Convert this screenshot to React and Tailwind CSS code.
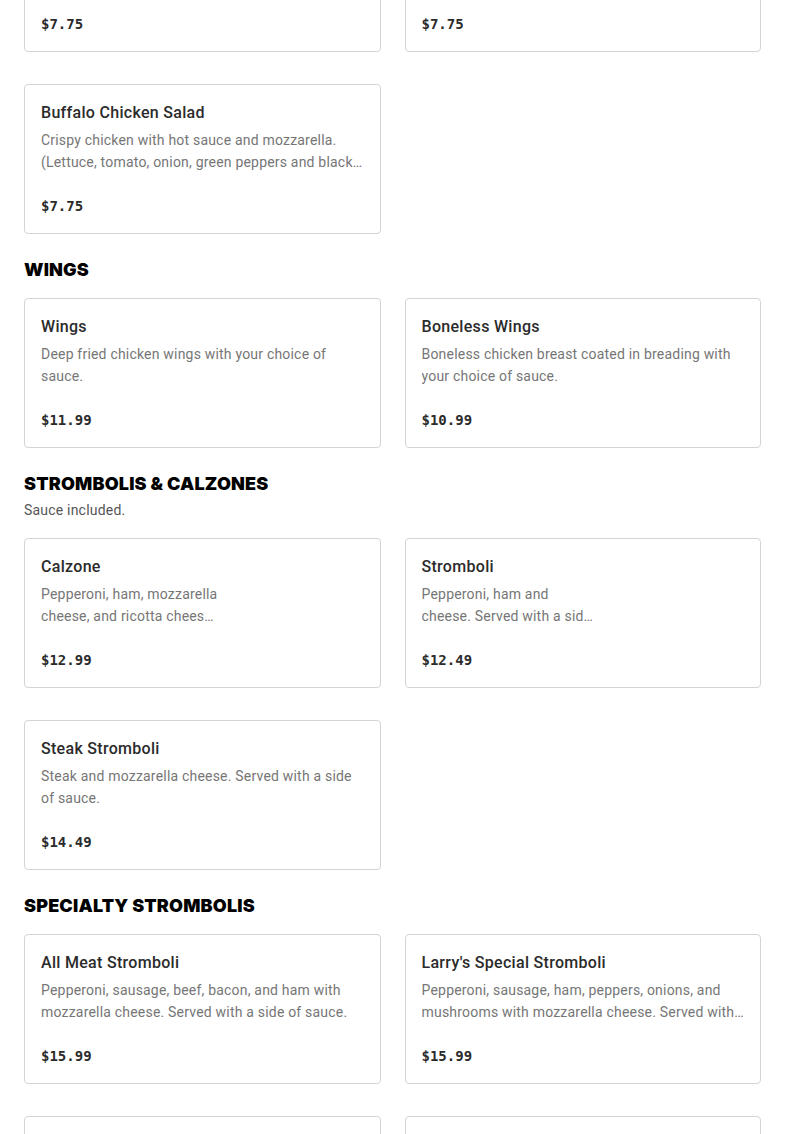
const sections = [
  {
    title: null,
    items: [
      { name: 'Chef Salad', desc: 'Ham, turkey, cheese, lettuce, tomato, onion and green peppers.', price: '$7.75' },
      { name: 'Grilled Chicken Salad', desc: 'Grilled chicken with mozzarella. Lettuce, tomato, onion and green peppers.', price: '$7.75' },
      { name: 'Buffalo Chicken Salad', desc: 'Crispy chicken with hot sauce and mozzarella. (Lettuce, tomato, onion, green peppers and black olives.)', price: '$7.75' },
    ],
  },
  {
    title: 'WINGS',
    items: [
      { name: 'Wings', desc: 'Deep fried chicken wings with your choice of sauce.', price: '$11.99' },
      { name: 'Boneless Wings', desc: 'Boneless chicken breast coated in breading with your choice of sauce.', price: '$10.99' },
    ],
  },
  {
    title: 'STROMBOLIS & CALZONES',
    sub: 'Sauce included.',
    items: [
      { name: 'Calzone', desc: 'Pepperoni, ham, mozzarella cheese, and ricotta cheese. Served with a side of sauce.', price: '$12.99', narrow: true },
      { name: 'Stromboli', desc: 'Pepperoni, ham and cheese. Served with a side of sauce.', price: '$12.49', narrow: true },
      { name: 'Steak Stromboli', desc: 'Steak and mozzarella cheese. Served with a side of sauce.', price: '$14.49' },
    ],
  },
  {
    title: 'SPECIALTY STROMBOLIS',
    items: [
      { name: 'All Meat Stromboli', desc: 'Pepperoni, sausage, beef, bacon, and ham with mozzarella cheese. Served with a side of sauce.', price: '$15.99' },
      { name: "Larry's Special Stromboli", desc: 'Pepperoni, sausage, ham, peppers, onions, and mushrooms with mozzarella cheese. Served with a side of sauce.', price: '$15.99' },
      { name: 'Chicken Bacon Ranch Stromboli', desc: 'Chicken, bacon, ranch and mozzarella cheese. Served with a side of sauce.', price: '$15.99' },
      { name: 'Veggie Stromboli', desc: 'Peppers, onions, mushrooms, black olives and mozzarella cheese.', price: '$14.99' },
    ],
  },
];

function ItemCard({ item }) {
  return (
    <div className="h-[150px] rounded border border-[#d4d4d4] bg-white p-4 flex flex-col">
      <p className="text-[16px] leading-6 font-medium tracking-[0.3px] text-[#2b2b2b]">{item.name}</p>
      <p className={`mt-1 min-h-[44px] text-[14px] leading-[22px] tracking-[0.2px] text-[#767676] line-clamp-2 ${item.narrow ? 'w-[177px]' : ''}`}>
        {item.desc}
      </p>
      <p className="mt-[23px] text-[14px] leading-5 font-bold text-[#2b2b2b]" style={{ fontFamily: '"DejaVu Sans Mono", "Liberation Mono", monospace' }}>
        {item.price}
      </p>
    </div>
  );
}

export default function App() {
  return (
    <div className="h-[1134px] overflow-hidden bg-white" style={{ fontFamily: 'Roboto, "Noto Sans", sans-serif' }}>
      <div className="-mt-[98px] px-6 flex flex-col gap-6">
        {sections.map((s, i) => (
          <section key={i}>
            {s.title && (
              <div className={s.sub ? 'mb-[18px]' : 'mb-4'}>
                <h2 className="text-[18px] leading-6 font-black tracking-[0.01em] text-black" style={{ fontFamily: 'Inter, sans-serif' }}>{s.title}</h2>
                {s.sub && <p className="mt-1 text-[14px] leading-5 tracking-[0.2px] text-[#555]">{s.sub}</p>}
              </div>
            )}
            <div className="grid grid-cols-2 gap-x-6 gap-y-8">
              {s.items.map(item => <ItemCard key={item.name} item={item} />)}
            </div>
          </section>
        ))}
      </div>
    </div>
  );
}
